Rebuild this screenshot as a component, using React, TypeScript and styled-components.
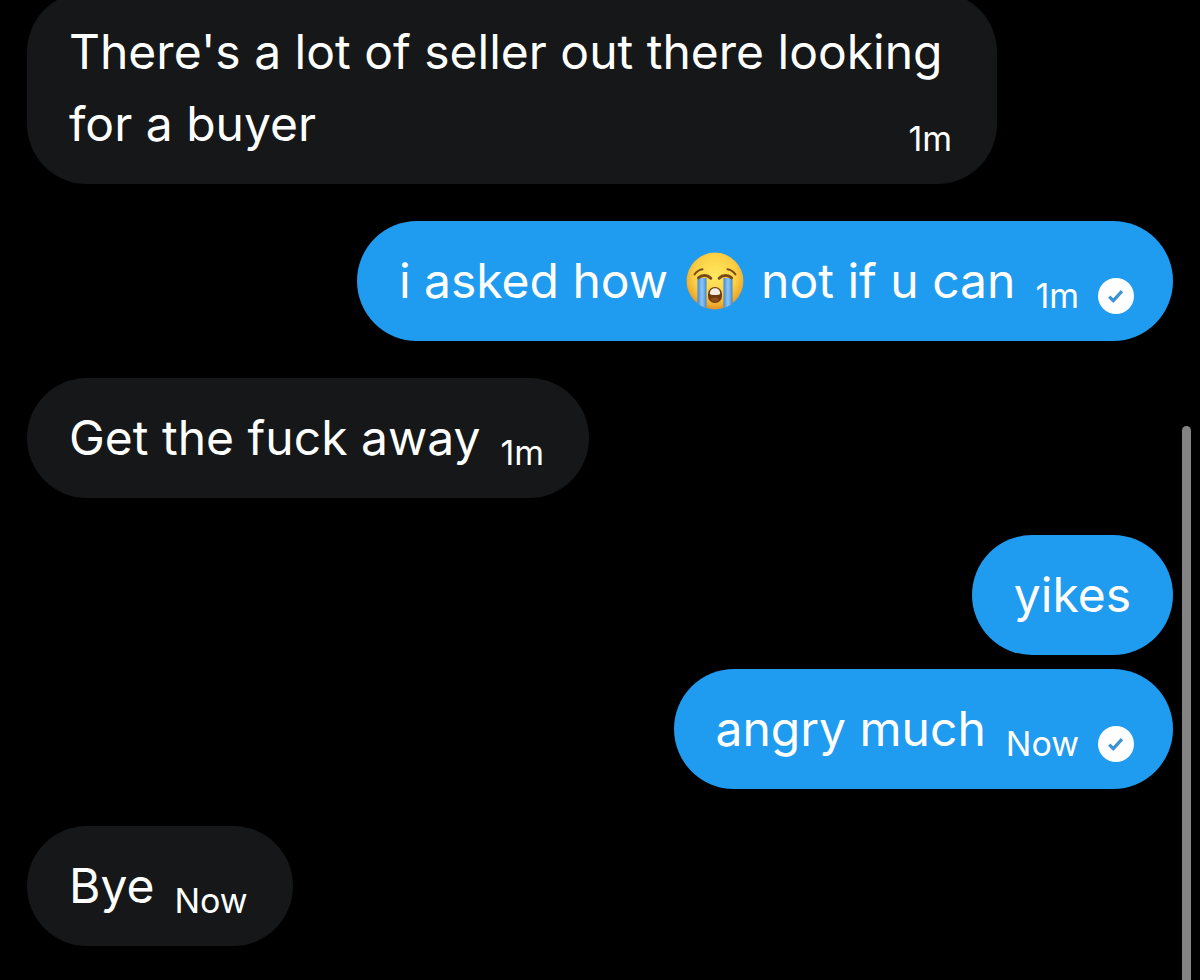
import React from "react";
import styled, { createGlobalStyle } from "styled-components";

const GlobalStyle = createGlobalStyle`
  * { box-sizing: border-box; }
  body {
    margin: 0;
    background: #000;
    color: #fff;
    font-family: Inter, "Noto Sans", sans-serif;
  }
`;

const Screen = styled.main`
  position: relative;
  display: flex;
  flex-direction: column;
  justify-content: flex-end;
  height: 100vh;
  overflow: hidden;
`;

const Thread = styled.ol`
  display: flex;
  flex-direction: column;
  gap: 37px;
  margin: 0;
  padding: 0 27px 34px;
  list-style: none;
`;

const Group = styled.li<{ $own: boolean }>`
  display: flex;
  flex-direction: column;
  align-items: ${({ $own }) => ($own ? "flex-end" : "flex-start")};
  gap: 14px;
`;

type Trailing = "text" | "time" | "receipt";

const trailingPadding: Record<Trailing, number> = { text: 42, time: 45, receipt: 39 };

const Bubble = styled.p<{ $own: boolean; $trailing: Trailing }>`
  display: flow-root;
  max-width: 970px;
  margin: 0;
  padding: 24px ${({ $trailing }) => trailingPadding[$trailing]}px 24px 42px;
  border-radius: 60px;
  background: ${({ $own }) => ($own ? "#1f9bf0" : "#151718")};
  font-size: 48px;
  line-height: 72px;
`;

const Meta = styled.span`
  display: flex;
  float: right;
  align-items: center;
  gap: 19px;
  margin: 31px 0 0 20px;
  font-size: 34px;
  line-height: 40px;
`;

const ReceiptIcon = styled.svg`
  display: block;
  width: 36px;
  height: 36px;
`;

const EmojiIcon = styled.svg`
  width: 58px;
  height: 58px;
  margin: 0 4px;
  vertical-align: -12px;
`;

const ScrollThumb = styled.div`
  position: absolute;
  top: 426px;
  right: 9px;
  bottom: 0;
  width: 9px;
  border-radius: 5px 5px 0 0;
  background: #838383;
`;

function Receipt() {
  return (
    <ReceiptIcon viewBox="0 0 36 36" role="img" aria-label="Sent">
      <circle cx="18" cy="18" r="18" fill="#fff" />
      <path d="M11.2 18.600 15.300 22.600 24 13.200" fill="none" stroke="#3d92d6" strokeWidth="3.200" />
    </ReceiptIcon>
  );
}

function CryingFace() {
  return (
    <EmojiIcon viewBox="0 0 58 58" role="img" aria-label="Loudly crying face">
      <defs>
        <radialGradient id="face" cx="0.5" cy="0.4" r="0.62">
          <stop offset="0" stopColor="#ffe860" />
          <stop offset="0.6" stopColor="#fbd044" />
          <stop offset="0.85" stopColor="#efab2e" />
          <stop offset="1" stopColor="#d88a28" />
        </radialGradient>
        <linearGradient id="tear" x1="0" y1="0" x2="1" y2="0">
          <stop offset="0" stopColor="#3f86d4" />
          <stop offset="0.25" stopColor="#69abe8" />
          <stop offset="0.5" stopColor="#8cc6f2" />
          <stop offset="0.75" stopColor="#69abe8" />
          <stop offset="1" stopColor="#3f86d4" />
        </linearGradient>
        <clipPath id="head">
          <circle cx="29" cy="29" r="28.4" />
        </clipPath>
      </defs>
      <circle cx="29" cy="29" r="28.4" fill="url(#face)" />
      <g clipPath="url(#head)" fill="url(#tear)">
        <path d="M11.500 26h9v32h-9z" />
        <path d="M37.500 26h9v32h-9z" />
      </g>
      <g fill="none" stroke="#7a4a16" strokeLinecap="round">
        <path d="M8.500 22.500C10.500 19.500 13 17.800 16.500 17.200" strokeWidth="2" />
        <path d="M41.500 17.200C45 17.800 47.500 19.500 49.500 22.500" strokeWidth="2" />
        <path d="M12.500 25.800C15.500 22.800 21.500 22.800 24.800 26.200" strokeWidth="3" />
        <path d="M33.200 26.200C36.500 22.800 42.500 22.800 45.500 25.800" strokeWidth="3" />
      </g>
      <rect x="22" y="35" width="14" height="16" rx="7" fill="#70390c" />
      <path d="M23.800 41.500C23.800 34.500 34.200 34.500 34.200 41.500C34.200 43.500 23.800 43.500 23.800 41.500Z" fill="#f3ede4" />
      <ellipse cx="29" cy="47.500" rx="4" ry="2" fill="#8f4f1a" />
    </EmojiIcon>
  );
}

interface Message {
  body: React.ReactNode;
  time?: string;
}

interface MessageGroup {
  own: boolean;
  messages: Message[];
}

const conversation: MessageGroup[] = [
  {
    own: false,
    messages: [{ body: "There's a lot of seller out there looking for a buyer", time: "1m" }],
  },
  {
    own: true,
    messages: [
      {
        body: (
          <>
            i asked how <CryingFace /> not if u can
          </>
        ),
        time: "1m",
      },
    ],
  },
  { own: false, messages: [{ body: "Get the fuck away", time: "1m" }] },
  { own: true, messages: [{ body: "yikes" }, { body: "angry much", time: "Now" }] },
  { own: false, messages: [{ body: "Bye", time: "Now" }] },
];

export default function App() {
  return (
    <>
      <GlobalStyle />
      <Screen>
        <Thread>
          {conversation.map((group, g) => (
            <Group key={g} $own={group.own}>
              {group.messages.map((message, m) => (
                <Bubble
                  key={m}
                  $own={group.own}
                  $trailing={!message.time ? "text" : group.own ? "receipt" : "time"}
                >
                  {message.body}
                  {message.time && (
                    <Meta>
                      <time>{message.time}</time>
                      {group.own && <Receipt />}
                    </Meta>
                  )}
                </Bubble>
              ))}
            </Group>
          ))}
        </Thread>
        <ScrollThumb />
      </Screen>
    </>
  );
}
